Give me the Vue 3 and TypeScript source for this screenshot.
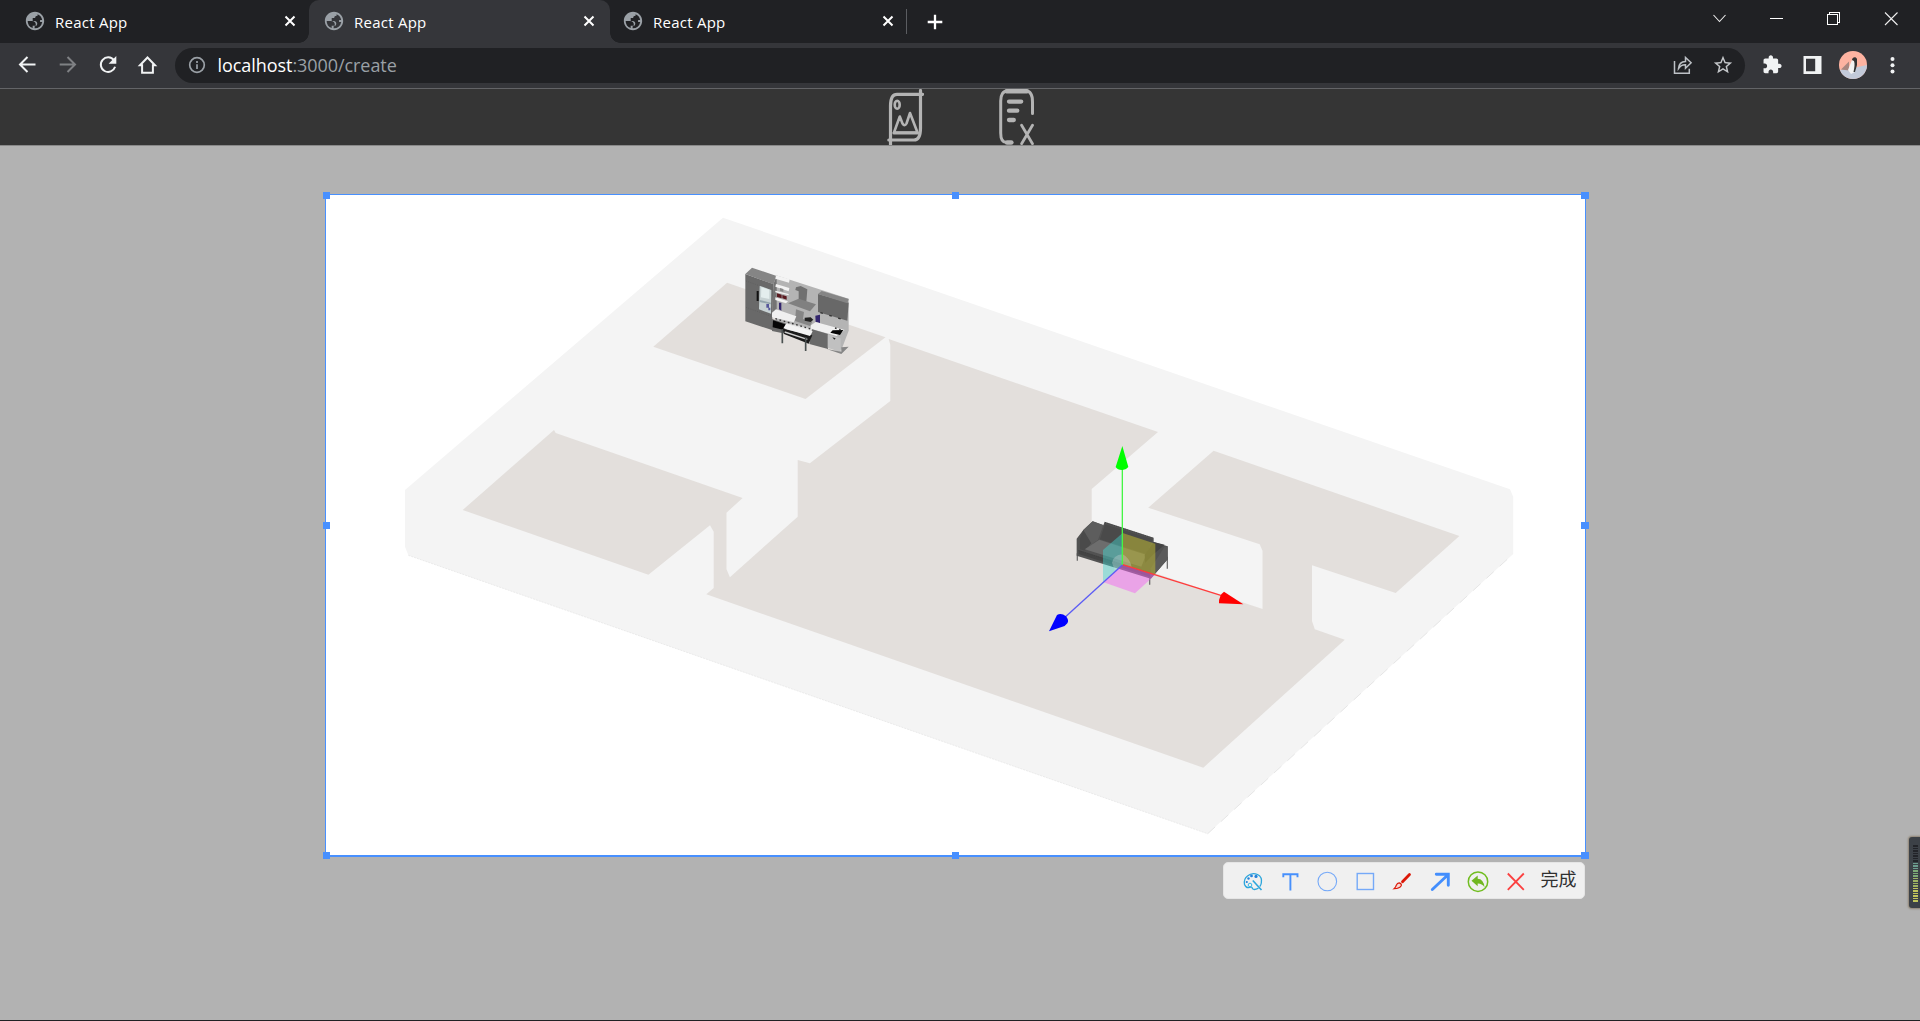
<script setup lang="ts">
interface Tab { id: number; title: string; active: boolean }

const tabs: Tab[] = [
  { id: 1, title: 'React App', active: false },
  { id: 2, title: 'React App', active: true },
  { id: 3, title: 'React App', active: false },
]

const handles: string[] = ['nw', 'n', 'ne', 'w', 'e', 'sw', 's', 'se']

const meter: string[] = Array.from({ length: 23 }, (_, i) => {
  if (i < 7) return '#222429'
  if (i < 10) return '#6b9d8e'
  if (i < 13) return '#7dab76'
  if (i < 17) return '#9db363'
  return '#c0c45c'
})
</script>

<template>
  <div class="screen">
    <header class="tabstrip">
      <div v-for="t in tabs" :key="t.id" class="tab" :class="{ active: t.active }">
        <svg class="globe" viewBox="0 0 24 24"><path d="M12 2C6.48 2 2 6.48 2 12s4.48 10 10 10 10-4.48 10-10S17.52 2 12 2zM4 12h4.400c3.410.020 4.900 1.730 4.470 5.120H9.470v2.470A8 8 0 0 1 4 12zm7.590 7.990v-2.260c2-.1 2.900-1.200 2.900-2.900-.1-1.800-1.200-2.800-2.800-2.800H9.500V8.800h2.700c.1-1.600.9-2.500 2.600-2.500V4.500A8 8 0 0 1 19.800 11h-2.200l-.1 2.200h2.400A8 8 0 0 1 11.590 19.990z" /></svg>
        <span class="title">{{ t.title }}</span>
        <svg class="close" viewBox="0 0 12 12"><path d="M1.500 1.500l9 9M10.500 1.500l-9 9" /></svg>
      </div>
      <i class="sep"></i>
      <svg class="plus" viewBox="0 0 16 16"><path d="M8 .7v14.600M.7 8h14.600" /></svg>
      <div class="window-buttons">
        <svg viewBox="0 0 58 43"><path d="M23.500 15l6 6.500l6-6.500" /></svg>
        <svg viewBox="0 0 58 43" class="crisp"><path d="M22 18.500h13" /></svg>
        <svg viewBox="0 0 58 43" class="crisp"><path d="M21.500 14.500h10v10h-10zM23.500 14.500v-2h10v10h-2" /></svg>
        <svg viewBox="0 0 58 43"><path d="M21 12.500l12.500 12.500M33.500 12.500l-12.500 12.500" /></svg>
      </div>
    </header>

    <nav class="toolbar">
      <svg class="tool" viewBox="0 0 40 40"><path d="M27.500 19.500H12.800M19.500 12l-7.500 7.500l7.500 7.500" /></svg>
      <svg class="tool dim" viewBox="0 0 40 40"><path d="M11.700 19.500h14.800M19.500 12l7.500 7.500l-7.500 7.500" /></svg>
      <svg class="tool" viewBox="0 0 40 40"><path d="M26 15.300a7.300 7.300 0 1 0 1.100 6.500" /><path class="solid" d="M28.300 11v7.700h-7.700z" /></svg>
      <svg class="tool" viewBox="0 0 40 40"><path d="M12 20.300l7.500-7.800l7.500 7.800h-2.100v7.400h-10.800v-7.400z" /></svg>
      <div class="omnibox">
        <svg class="info" viewBox="0 0 18 18"><circle cx="9" cy="9" r="7.300" /><path d="M9 8.200v4.800M9 5v1.900" /></svg>
        <span class="url"><b>localhost</b>:3000/create</span>
        <svg class="share" viewBox="0 0 20 20"><path d="M1.500 6v12.300h14.800v-4.500" /><path d="M5.500 13.500c.3-4.500 2.800-6.800 7-7V2.500l5.600 5.300l-5.600 5.400V9.800c-3-.1-5.200 1-7 3.700z" /></svg>
        <svg class="star" viewBox="0 0 24 24"><path d="M22 9.240l-7.190-.62L12 2 9.190 8.630 2 9.240l5.460 4.730L5.820 21 12 17.270 18.180 21l-1.630-7.030L22 9.240zM12 15.400l-3.760 2.270 1-4.280-3.320-2.880 4.380-.38L12 6.100l1.710 4.040 4.380.38-3.320 2.880 1 4.280L12 15.400z" /></svg>
      </div>
      <svg class="tool" viewBox="0 0 40 40"><path class="solid" transform="translate(8.800 9.300) scale(.86)" d="M20.500 11H19V7c0-1.100-.9-2-2-2h-4V3.500C13 2.120 11.880 1 10.500 1S8 2.120 8 3.500V5H4c-1.100 0-1.990.9-1.990 2v3.800H3.500c1.490 0 2.700 1.210 2.700 2.700s-1.210 2.700-2.700 2.700H2V20c0 1.100.9 2 2 2h3.800v-1.500c0-1.490 1.210-2.700 2.700-2.700 1.490 0 2.700 1.210 2.700 2.700V22H17c1.100 0 2-.9 2-2v-4h1.500c1.380 0 2.500-1.120 2.500-2.500S21.880 11 20.500 11z" /></svg>
      <svg class="tool" viewBox="0 0 40 40"><path class="solid" fill-rule="evenodd" d="M10.500 11h18v18h-18zM13 13.700v12.600h9.200v-12.600z" /></svg>
      <svg class="tool" viewBox="0 0 40 40">
        <defs><clipPath id="face"><circle cx="20" cy="20" r="14" /></clipPath></defs>
        <g clip-path="url(#face)" class="avatar">
          <rect x="6" y="6" width="28" height="28" fill="#feb3a1" />
          <path d="M6 25l14-2l14-3v14H6z" fill="#c3cad9" />
          <path d="M8 24.500l8-8v9z" fill="#a9867f" />
          <path d="M19 15l4 2l-1 10l-4 2l-3-4z" fill="#f2f2f2" />
          <path d="M19 15c0-3 4-4 5-1v6l-2 7h-1.500c1-5 1.500-8 .5-11z" fill="#343434" />
        </g>
      </svg>
      <svg class="tool" viewBox="0 0 40 40"><g class="solid"><circle cx="19.500" cy="14" r="2" /><circle cx="19.500" cy="20.300" r="2" /><circle cx="19.500" cy="26.600" r="2" /></g></svg>
    </nav>

    <div class="app-header">
      <svg class="image-icon" viewBox="0 0 38 56">
        <g fill="none" stroke="#b4b4b4" stroke-linecap="round" stroke-linejoin="round">
          <path d="M4.500 57V17Q4.500 5.300 11 5.300H36.500" stroke-width="3.200" />
          <path d="M34.500 1.500V39Q34.500 51 28 51H2.800" stroke-width="3.200" />
          <ellipse cx="11.200" cy="15.700" rx="2.500" ry="4" stroke-width="2.600" />
          <path d="M8 43.500L13.800 27.500L16.500 34.500Q18.700 38 20.500 34.500L24 24L31.500 43.500Z" stroke-width="2.600" />
          <path d="M8 44H31.500" stroke-width="3.200" />
        </g>
      </svg>
      <svg class="list-icon" viewBox="0 0 38 56">
        <g fill="none" stroke="#b4b4b4" stroke-linecap="round">
          <path d="M34.500 24.500V13Q34.500 2 28 2H9.500Q2.700 2 2.700 12V44Q2.700 53.500 8.500 53.500H14" stroke-width="3" />
          <path d="M8.500 2.300H29M9 53.500H13.300" stroke-width="4.400" />
          <path d="M11 12.600H23.200M11 21.700H19.300M11 31H15.800" stroke-width="4.300" />
          <path d="M23.600 36.300L34.500 54.700M34.500 36.300L23.600 54.700" stroke-width="2.800" />
        </g>
      </svg>
    </div>

    <main class="workspace">
      <section class="selection">
        <svg class="scene" viewBox="326 195 1259 660">
          <path fill="#f4f4f4" d="M723 217.700L1510 489.300L1513.200 496.700V554L1207.700 833.700L408.400 555.300L405 546.700V490Z" />
          <path fill="none" stroke="#ebebeb" stroke-width="1" stroke-dasharray="2 1" d="M408.400 555.300L1207.700 833.700" />
          <path fill="none" stroke="#e6e6e6" stroke-width="1" stroke-dasharray="10 8" d="M1207.700 833.700L1513 554" />
          <g fill="#e3dfdc">
            <path d="M727.100 282.700L885.500 337.300L805.500 399L653.300 346.700Z" />
            <path d="M554 430L555.700 433L742.600 498L726.500 512.700V569.300L729.900 577.300L797.700 516.700V460L809.900 463.300L890.300 401V345L888.700 339L1158 432L1091.700 489V552L1262.500 609V550.700L1259.700 544.300L1148.200 507.700L1213.600 450.700L1459.400 536L1395.700 593L1312 565.300V621L1314.800 629.300L1344.800 639.700L1203.300 767.700L706.300 594.300L713.700 588V531.700L710 525.300L648.400 574.700L462.700 510Z" />
          </g>

          <g transform="translate(720 250) scale(.33333)">
            <path fill="#b4b4b4" d="M168 76L386 146V242L364 300L168 240Z" />
            <path fill="#696969" d="M76 72L160 102L156 240L76 214Z" />
            <path fill="#858585" d="M76 72L96 53L170 78L160 103Z" />
            <path fill="#747474" d="M160 102L170 78V186L156 200Z" />
            <path stroke="#505050" stroke-dasharray="3 4" fill="none" d="M78 93L158 121M78 172L156 200" />
            <path fill="#c7d2d3" d="M119 107L154 120L153 191L117 178Z" />
            <path fill="#e4eeee" d="M124 111L148 119V147L123 142Z" />
            <path fill="#93a4ab" d="M119 150L152 158V163L119 156Z" />
            <path fill="#111" d="M110 123h6v30h-6z" /><path fill="#55579a" d="M139 162h8v11h-8zM145 173h6v8h-6z" />
            <path fill="#f3f3f3" d="M168 76L209 88L207 98L166 86ZM168 102L208 114L206 124L166 110ZM166 122L206 132V136L166 127ZM166 142L204 154L198 160L166 150Z" />
            <path fill="#888" d="M180 114l10 3v9l-10-4z" /><path fill="#5a1a20" d="M171 130l14 4v11l-14-4zM187 135l13 4v10l-13-4z" />
            <path fill="#707070" d="M228 112L242 108L262 118L259 156L236 150V124L226 120Z" />
            <path fill="#808080" d="M204 160L236 146L288 163L270 184Z" />
            <path fill="#686868" d="M294 132L386 158L382 212L294 186Z" /><path fill="#858585" d="M294 132L305 123L386 147L382 160Z" />
            <path fill="none" stroke="#333" stroke-width="4" stroke-dasharray="8 20" d="M301 188L372 210" />
            <path fill="#33266e" d="M177 158h7v24l-7-4zM286 197l14-3v25l-13-3z" />
            <path fill="#868686" d="M228 178L252 186L249 207L277 215L270 228L225 213Z" />
            <path fill="#222" d="M254 203l18-1l8 7l-8 7l-18-4z" />
            <path fill="#f0f0f0" d="M156 188L168 178L229 199L221 217L156 202ZM273 226L287 216L374 240L350 258L272 236Z" />
            <path fill="#e2e2e2" d="M196 218L276 236V246L196 226Z" />
            <path fill="#696969" d="M156 207L200 221V252L156 243ZM276 238L324 252V297L268 282Z" />
            <path fill="#060606" d="M159 211L200 224L192 240L158 232ZM338 241l32-1l-10 15l-29-7z" />
            <path fill="none" stroke="#333" stroke-width="4" stroke-dasharray="5 8" d="M166 206L276 238M345 234L370 242" />
            <path fill="#c0c0c0" d="M323 253L362 265V307L323 293Z" />
            <path fill="#868686" d="M364 292L386 290L364 312L320 297L364 305Z" />
            <path fill="#1b1b1b" d="M188 236L277 256L266 281L192 252Z" />
            <path fill="none" stroke="#cfcfcf" stroke-width="4" d="M194 246L262 268" />
            <path fill="#f4f4f4" d="M198 221L278 244L270 258L190 235Z" />
            <path fill="none" stroke="#4a5050" stroke-width="5" d="M187 237V280M257 262V303" />
            <path fill="#222" d="M337 262l10 3l-4 4z" />
          </g>

          <g transform="translate(1030 430) scale(.33333)">
            <path fill="none" stroke="#707070" stroke-width="4" d="M142 370V392M412 380V416M359 440V464" />
            <path fill="#525252" d="M140 326L160 300L188 274L220 286L224 275L371 323V336L413 349V388L362 446L140 377Z" />
            <path fill="#5d5d5d" d="M188 274L220 285L204 330L165 358L160 300Z" />
            <path fill="#4a4a4a" d="M160 300L184 340L166 362L150 358V326ZM225 283L368 328L350 372L210 328Z" />
            <path fill="#6d6d6d" d="M208 329L348 374L334 410L164 358Z" />
            <path fill="#444" d="M146 360L360 428V440L146 372ZM371 336L404 344L367 376L346 398L344 375Z" />
            <path fill="#5b5b5b" d="M404 350L413 349V388L362 446V415Z" />
            <path fill="none" stroke="#3c3c3c" stroke-dasharray="3 4" stroke-width="2" d="M145 362L350 426M225 278L368 324" />
            <path fill="#42d6d0" fill-opacity=".45" d="M278 309L219 360V456L278 404Z" />
            <path fill="#c5c030" fill-opacity=".5" d="M278 309L376 341V434L278 404Z" />
            <path fill="#f168f1" fill-opacity=".5" d="M278 404L376 434L315 490L219 456Z" />
            <path fill="#ddd" fill-opacity=".3" d="M246 398Q250 375 278 373Q300 384 305 412L278 404L254 421Z" />
            <path stroke="#5c5cf5" stroke-width="4" d="M278 404L105 562" /><path stroke="#ff3c3c" stroke-width="4" d="M278 404L575 497" />
            <path stroke="#46f546" stroke-width="4" d="M277 404V115" />
            <path fill="#0f0" d="M277 48L295 111Q287 121 276 120Q262 120 257 111Z" />
            <path fill="red" d="M640 523L582 485Q566 496 567 520Z" />
            <path fill="#00f" d="M57 604L81 555Q94 548 108 559Q118 571 112 580Q107 588 95 591Z" />
          </g>
        </svg>
        <i v-for="h in handles" :key="h" class="handle" :class="h"></i>
      </section>

      <div class="edit-tools">
        <svg class="palette" viewBox="0 0 34 36">
          <g fill="none" stroke="#2ca6dc" stroke-width="1.300">
            <path d="M20.500 25.200Q16 27.500 14.500 25.700Q14 23.200 11.500 24.500Q8.200 25.500 6.500 21.500Q5.500 16 9.500 13Q14 9 19.500 11.500Q24.500 14 23.300 20Q23 22 21.800 23.500" />
            <path d="M14.800 17.500L23.500 27" stroke-width="1.600" />
          </g>
          <g fill="#2482dc"><circle cx="13.500" cy="12.900" r="1.400" /><circle cx="18" cy="13.400" r="1.600" /><circle cx="10.500" cy="15.500" r="1.200" /><circle cx="8.800" cy="19" r="1.100" /></g>
          <circle cx="12" cy="22" r="1.800" fill="none" stroke="#35b6e6" />
        </svg>
        <svg viewBox="0 0 37 36"><path d="M11.300 14.300V11.300H25.500V14.300M18.400 11.300V27.500" fill="none" stroke="#4790fc" stroke-width="1.900" /></svg>
        <svg viewBox="0 0 38 36"><circle cx="18.300" cy="18.500" r="9.300" fill="none" stroke="#75a9f8" stroke-width="1.100" /></svg>
        <svg viewBox="0 0 38 36"><rect x="10.200" y="10.500" width="16.300" height="16" fill="none" stroke="#75a9f8" stroke-width="1.400" /></svg>
        <svg viewBox="0 0 37 36"><path d="M24.500 11.500L17.500 18.800" stroke="#dc1808" stroke-width="2.800" stroke-linecap="round" /><path d="M14.200 19.800q2.500.6 2.100 2.600q-1.300 3-7.200 3.300q1.800-1.500 2.200-3.500q.9-2.200 2.900-2.400z" fill="#f7d9d5" stroke="#dc1808" stroke-width="1.200" /></svg>
        <svg viewBox="0 0 38 36"><path d="M10.300 26.500L26 11.700M14.300 11.300H26.300V22.300" fill="none" stroke="#438efd" stroke-width="2.900" stroke-linecap="round" /></svg>
        <svg viewBox="0 0 37 36"><circle cx="18" cy="18.700" r="9.700" fill="none" stroke="#71bd20" stroke-width="1.500" /><path d="M11.500 17.700L17.700 12.400V15.700Q23.500 15.700 24.500 24.200Q22 20.400 17.700 20.500V23.200Z" fill="#71b722" /></svg>
        <svg viewBox="0 0 38 36"><path d="M10.800 10.500L26.800 26.800M26.800 10.500L10.800 26.800" stroke="#fb4040" stroke-width="1.800" /></svg>
        <span class="done">完成</span>
      </div>

      <aside class="meter"><i v-for="(c, i) in meter" :key="i" :style="{ background: c }"></i></aside>
    </main>
  </div>
</template>

<style>
body { margin: 0; overflow: hidden; }
</style>

<style scoped>
.screen { width: 1920px; height: 1021px; box-sizing: border-box; border-bottom: 1px solid #202124; display: flex; flex-direction: column; overflow: hidden; background: #b2b2b2; font-family: "Open Sans", "Noto Sans", "Noto Sans CJK SC", sans-serif; }
svg { display: block; flex: none; }
.tabstrip { height: 43px; flex: none; display: flex; background: #202124; padding-left: 10px; }
.tab { width: 299px; height: 43px; box-sizing: border-box; padding: 0 14px; display: flex; align-items: center; position: relative; }
.tab.active { width: 301px; margin-right: -2px; padding-right: 16px; background: #35363a; border-radius: 10px 10px 0 0; }
.tab.active::before, .tab.active::after { content: ""; position: absolute; bottom: 0; width: 10px; height: 10px; }
.tab.active::before { left: -10px; background: radial-gradient(circle at 0 0, transparent 9.5px, #35363a 10px); }
.tab.active::after { right: -10px; background: radial-gradient(circle at 100% 0, transparent 9.5px, #35363a 10px); }
.globe { width: 22px; height: 22px; fill: #9aa0a6; margin-top: -1px; }
.title { flex: 1; margin-left: 9px; color: #fff; font-size: 15px; line-height: 20px; padding-top: 0; letter-spacing: .25px; }
.close { width: 12px; height: 12px; margin-right: -.500px; margin-top: -1px; fill: none; stroke: #fff; stroke-width: 2; }
.sep { width: 1px; height: 25px; margin: 9px 0 0 -1px; background: #5b5d61; }
.plus { width: 16px; height: 16px; margin: 13.500px 0 0 20px; fill: none; stroke: #fff; stroke-width: 2.300; }
.window-buttons { display: flex; margin-left: auto; }
.window-buttons svg { width: 58px; height: 43px; fill: none; stroke: #eee; stroke-width: 1.100; }
.window-buttons svg:last-child { margin-right: -2px; }
.window-buttons .crisp { shape-rendering: crispEdges; stroke: #fff; stroke-width: 1; }
.toolbar { height: 46px; flex: none; box-sizing: border-box; border-bottom: 1px solid #636467; background: #35363a; display: flex; align-items: center; padding: 0 7px 1px 8px; }
.tool { width: 40px; height: 40px; fill: none; stroke: #f1f3f4; stroke-width: 2; }
.tool.dim { stroke: #7f8184; }
.tool .solid { fill: #f1f3f4; stroke: none; }
.avatar { stroke: none; }
.omnibox { flex: 1; height: 35px; box-sizing: border-box; margin: 0 8px 0 7px; padding: 0 13px; border-radius: 18px; background: #202124; display: flex; align-items: center; }
.info { width: 18px; height: 18px; fill: none; stroke: #9aa0a6; stroke-width: 1.700; }
.url { flex: 1; margin-left: 11.500px; color: #9aa0a6; font-size: 18px; line-height: 24px; letter-spacing: -.06px; }
.url b { color: #fff; font-weight: 400; }
.share { width: 20px; height: 20px; margin-right: 19px; fill: none; stroke: #bdc1c6; stroke-width: 1.500; }
.star { width: 22px; height: 22px; margin-right: -1.500px; fill: #c4c7ca; }
.app-header { height: 57px; flex: none; box-sizing: border-box; border-bottom: 1px solid #898989; background: #353535; display: flex; justify-content: center; gap: 74px; padding-left: 1px; }
.image-icon, .list-icon { width: 38px; height: 56px; }
.workspace { flex: 1; position: relative; display: flex; flex-direction: column; align-items: flex-start; padding: 48px 0 0 325px; }
.selection { position: relative; width: 1261px; height: 663px; box-sizing: border-box; border: 1px solid #4890ff; border-bottom-width: 2px; background: #fff; }
.scene { width: 1259px; height: 660px; }
.handle { position: absolute; width: 7px; height: 7px; background: #4890ff; }
.nw, .n, .ne { top: -3px; }
.w, .e { top: 327px; }
.sw, .s, .se { top: 657px; }
.nw, .w, .sw { left: -3px; }
.n, .s { left: 626px; }
.ne, .e, .se { left: 1255px; width: 8px; }
.edit-tools { width: 362px; height: 37px; box-sizing: border-box; margin: 5px 0 0 898px; padding-left: 14px; display: flex; align-items: center; background: #f0f0f0; border: 1px solid #e5e5e5; border-radius: 5px; }
.edit-tools svg { height: 36px; }
.done { margin: -6px 0 0 5.500px; font: 18px/24px "Noto Sans CJK SC", sans-serif; color: #303030; white-space: nowrap; }
.meter { position: absolute; right: 0; top: 691px; width: 11px; height: 71px; box-sizing: border-box; padding: 8px 2px 0 4px; display: flex; flex-direction: column; gap: 1px; background: #3c4147; border-radius: 3px 0 0 3px; box-shadow: 0 0 2px 1px #8e8271; }
.meter i { height: 1.500px; flex: none; }
</style>
